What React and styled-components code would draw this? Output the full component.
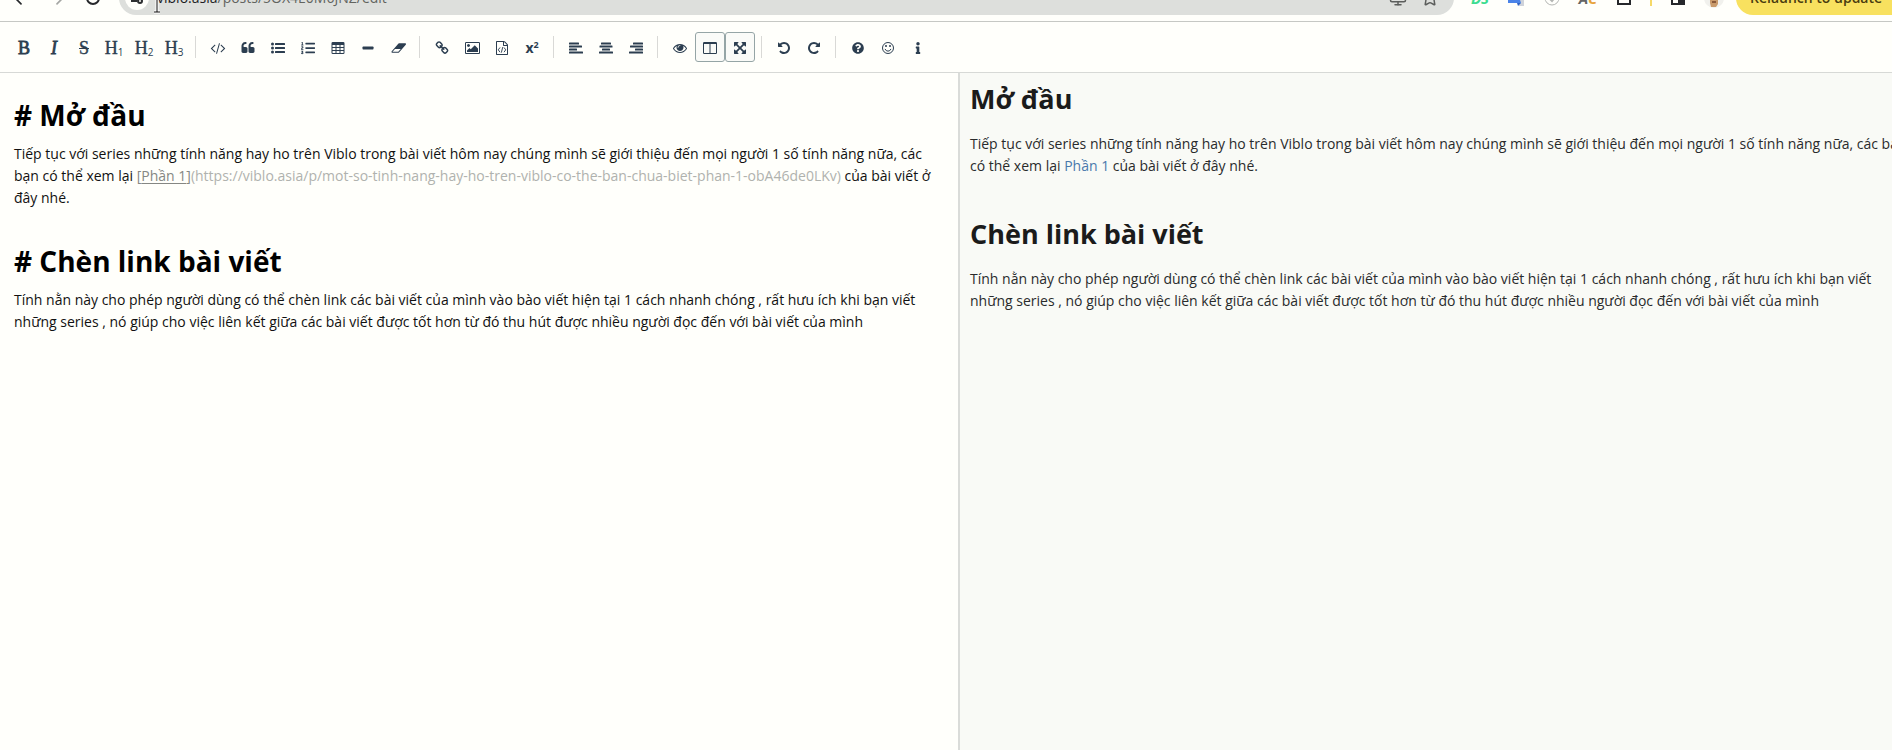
import React from "react";
import styled, { createGlobalStyle } from "styled-components";
import { ArrowLeft, ArrowRight, RotateCw, Monitor, Star } from "lucide-react";
import { FaListOl, FaQuestionCircle, FaInfo } from "react-icons/fa";

const GlobalStyle = createGlobalStyle`
  * {
    box-sizing: border-box;
  }

  body {
    margin: 0;
    overflow: hidden;
    background: #fffffb;
    font-family: "Open Sans", "Noto Sans", sans-serif;
  }
`

// the window is a little wider than what is visible
const Window = styled.div`
  display: flex;
  flex-direction: column;
  width: calc(100% + 28px);
  height: 100vh;
`

// BROWSER BAR
const BrowserBar = styled.header`
  flex: none;
  display: flex;
  align-items: flex-end;
  height: 22px;
  padding: 0 12px 6px 3px;
  border-bottom: 1px solid #c6c8c4;
  overflow: hidden;
  position: relative;
`

const BarButton = styled.button`
  flex: none;
  display: flex;
  align-items: center;
  justify-content: center;
  width: 36px;
  height: 34px;
  padding: 0;
  border: 0;
  background: none;
  color: ${({ $color }) => $color || "#26282b"};
  font: italic 700 15px "Open Sans", sans-serif;
`

const Omnibox = styled.div`
  flex: 1;
  display: flex;
  align-items: center;
  height: 34px;
  margin: 0 8px;
  padding: 0 8px 0 6px;
  border-radius: 17px;
  background: #dddfdc;
`

const SiteInfo = styled.button`
  display: flex;
  align-items: center;
  justify-content: center;
  width: 24px;
  height: 24px;
  margin-right: 8px;
  padding: 0;
  border: 0;
  border-radius: 50%;
  background: #fffffb;
`

const Address = styled.span`
  flex: 1;
  font-size: 14px;
  line-height: 20px;
  color: #62645f;

  b {
    font-weight: 400;
    color: #1c1d1f;
  }
`

const OmniButton = styled(BarButton)`
  width: 32px;
`

const BarDivider = styled.span`
  width: 2px;
  height: 16px;
  margin: 0 8px 9px;
  background: #f6d968;
`

const Relaunch = styled.button`
  flex: none;
  width: 172px;
  height: 34px;
  margin-left: 4px;
  padding: 0 14px;
  border: 0;
  border-radius: 17px;
  background: #f8e15f;
  color: #4a3c10;
  font: 600 14px/20px "Open Sans", sans-serif;
  text-align: left;
  white-space: nowrap;
`

const Cursor = styled.svg`
  position: absolute;
  left: 153px;
  top: 0;
`

// TOOLBAR
const ToolbarStyled = styled.div`
  flex: none;
  display: flex;
  align-items: center;
  padding: 10px 9px;
  border-bottom: 1px solid #d7d9d6;
`

const Tool = styled.button`
  display: flex;
  align-items: center;
  justify-content: center;
  width: 30px;
  height: 30px;
  padding: 2px 0 0;
  border: 1px solid ${({ $active }) => ($active ? "#95a5a6" : "transparent")};
  border-radius: 3px;
  background: ${({ $active }) => ($active ? "#fafbf8" : "none")};
  color: #2c3e50;

  svg {
    flex: none;
    overflow: visible;
  }
`

const Letter = styled.span`
  font-family: "Liberation Serif", serif;
  font-size: 18px;
  line-height: 20px;
  font-style: ${({ $italic }) => ($italic ? "italic" : "normal")};
  text-decoration: ${({ $strike }) => ($strike ? "line-through" : "none")};
  -webkit-text-stroke: ${({ $bold }) => ($bold ? "0.8px" : "0.4px")};

  sub {
    font: 10px/10px "Open Sans", sans-serif;
    vertical-align: -2px;
    -webkit-text-stroke: 0;
  }
`

const Power = styled.span`
  font: 700 14px/20px "Open Sans", sans-serif;

  sup {
    font-size: 9px;
    line-height: 9px;
    vertical-align: 5px;
  }
`

const Separator = styled.i`
  width: 1px;
  height: 22px;
  margin: 0 7px 0 6px;
  background: #d9d9d6;
`

// PANES
const Panes = styled.main`
  flex: 1;
  display: grid;
  grid-template-columns: 1fr 1fr;
  min-height: 0;
`

const Editor = styled.section`
  padding: 21px 14px;
  border-right: 2px solid #dadcd9;
  outline: none;
  color: #111;
  font-size: 14px;
  line-height: 22px;

  h1 {
    margin: 0 0 7px;
    color: #000;
    font-size: 28px;
    line-height: 42px;
  }

  p {
    margin: 0 0 31px;
  }
`

const LinkLabel = styled.span`
  color: #858783;

  u {
    text-underline-offset: 2px;
  }
`

const LinkUrl = styled.span`
  color: #b0b2ae;
`

const Preview = styled.section`
  padding: 6px 10px;
  background: #f9faf6;
  color: #292b2c;
  font-size: 14px;
  line-height: 22px;

  h1 {
    margin: 0 0 14px;
    color: #1b1b1b;
    font-size: 27px;
    line-height: 40px;
  }

  p {
    margin: 0 0 37px;
  }

  a {
    color: #4a78ac;
    text-decoration: none;
  }
`

// ICONS, drawn on a 1792 unit grid
const Glyph = ({ box = "0 0 1792 1792", width = 14, children }) => (
  <svg width={width} height="14" viewBox={box} fill="currentColor" aria-hidden="true">
    {children}
  </svg>
)

const Code = () => (
  <Glyph>
    <path d="M553 1399l-50 50q-10 10-23 10t-23-10l-466-466q-10-10-10-23t10-23l466-466q10-10 23-10t23 10l50 50q10 10 10 23t-10 23l-393 393 393 393q10 10 10 23t-10 23zm591-1067l-373 1291q-4 13-15.5 19.5t-23.5 2.5l-62-17q-13-4-19.5-15.5t-2.5-24.5l373-1291q4-13 15.5-19.5t23.5-2.5l62 17q13 4 19.5 15.5t2.5 24.5zm657 651l-466 466q-10 10-23 10t-23-10l-50-50q-10-10-10-23t10-23l393-393-393-393q-10-10-10-23t10-23l50-50q10-10 23-10t23 10l466 466q10 10 10 23t-10 23z" />
  </Glyph>
)

const quote = "v384q0 80-56 136t-136 56h-384q-80 0-136-56t-56-136v-704q0-104 40.5-198.5t109.5-163.5 163.5-109.5 198.5-40.5h64q26 0 45 19t19 45v128q0 26-19 45t-45 19h-64q-106 0-181 75t-75 181v32q0 40 28 68t68 28h224q80 0 136 56t56 136z"

const Quote = () => (
  <Glyph>
    <path d={`M832 960${quote}M1728 960${quote}`} />
  </Glyph>
)

const ListUl = () => (
  <Glyph>
    {[384, 896, 1408].map(y => (
      <g key={y}>
        <circle cx="192" cy={y} r="192" />
        <rect x="512" y={y - 128} width="1280" height="256" rx="32" />
      </g>
    ))}
  </Glyph>
)

const Table = () => (
  <Glyph box="64 0 1664 1792">
    <path
      fillRule="evenodd"
      d="M224 128h1344q160 0 160 160v1216q0 160-160 160H224q-160 0-160-160V288q0-160 160-160zM192 512v256h384V512zm512 0v256h384V512zm512 0v256h384V512zM192 896v256h384V896zm512 0v256h384V896zm512 0v256h384V896zM192 1280v256h384v-256zm512 0v256h384v-256zm512 0v256h384v-256z"
    />
  </Glyph>
)

const Minus = () => (
  <Glyph>
    <rect x="192" y="704" width="1408" height="384" rx="96" />
  </Glyph>
)

const Eraser = () => (
  <Glyph box="0 0 1984 1792" width={15}>
    <path d="M960 1408l336-384h-768l-336 384h768zm1013-1077q15 34 9.5 71.5t-30.5 65.5l-896 1024q-38 44-96 44h-768q-38 0-69.5-20.5t-47.5-54.5q-15-34-9.5-71.5t30.5-65.5l896-1024q38-44 96-44h768q38 0 69.5 20.5t47.5 54.5z" />
  </Glyph>
)

const Chain = () => (
  <Glyph>
    <path d="M1520 1216q0-40-28-68l-208-208q-28-28-68-28-42 0-72 32 3 3 19 18.5t21.5 21.5 15 19 13 25.5 3.5 27.5q0 40-28 68t-68 28q-15 0-27.5-3.5t-25.5-13-19-15-21.5-21.5-18.5-19q-33 31-33 73 0 40 28 68l206 207q27 27 68 27 40 0 68-26l147-146q28-28 28-67zm-703-705q0-40-28-68l-206-207q-28-28-68-28-39 0-68 27l-147 146q-28 28-28 67 0 40 28 68l208 208q27 27 68 27 42 0 72-31-3-3-19-18.5t-21.5-21.5-15-19-13-25.5-3.5-27.5q0-40 28-68t68-28q15 0 27.5 3.5t25.5 13 19 15 21.5 21.5 18.5 19q33-31 33-73zm895 705q0 120-85 203l-147 146q-83 83-203 83-121 0-204-85l-206-207q-83-83-83-203 0-123 88-209l-88-88q-86 88-208 88-120 0-204-84l-208-208q-84-84-84-204t85-203l147-146q83-83 203-83 121 0 204 85l206 207q83 83 83 203 0 123-88 209l88 88q86-88 208-88 120 0 204 84l208 208q84 84 84 204z" />
  </Glyph>
)

const Picture = () => (
  <Glyph box="-64 0 1920 1792" width={15}>
    <path d="M576 576q0 80-56 136t-136 56-136-56-56-136 56-136 136-56 136 56 56 136zm1024 384v448h-1408v-192l320-320 160 160 512-512zm96-704h-1600q-13 0-22.5 9.5t-9.5 22.5v1216q0 13 9.5 22.5t22.5 9.5h1600q13 0 22.5-9.5t9.5-22.5v-1216q0-13-9.5-22.5t-22.5-9.5zm160 32v1216q0 66-47 113t-113 47h-1600q-66 0-113-47t-47-113v-1216q0-66 47-113t113-47h1600q66 0 113 47t47 113z" />
  </Glyph>
)

const FileCode = () => (
  <Glyph>
    <path d="M1596 380q28 28 48 76t20 88v1152q0 40-28 68t-68 28h-1344q-40 0-68-28t-28-68v-1600q0-40 28-68t68-28h896q40 0 88 20t76 48zm-444-244v376h376q-10-29-22-41l-313-313q-12-12-41-22zm384 1528v-1024h-416q-40 0-68-28t-28-68v-416h-768v1536h1280z" />
    <path d="M640 830L420 1130l220 300M1152 830l220 300-220 300M990 780L810 1490" fill="none" stroke="currentColor" strokeWidth="120" />
  </Glyph>
)

// shift: which side the short lines stick to
const Align = ({ shift }) => (
  <Glyph>
    {[1280, 1664, 1024, 1792].map((width, i) => (
      <rect key={width} x={(1792 - width) * shift} y={192 + i * 384} width={width} height="256" rx="48" />
    ))}
  </Glyph>
)

const Eye = () => (
  <Glyph>
    <path d="M1664 960q-152-236-381-353 61 104 61 225 0 185-131.5 316.5t-316.5 131.5-316.5-131.5-131.5-316.5q0-121 61-225-229 117-381 353 133 205 333.5 326.5t434.5 121.5 434.5-121.5 333.5-326.5zm-720-384q0-20-14-34t-34-14q-125 0-214.5 89.5t-89.5 214.5q0 20 14 34t34 14 34-14 14-34q0-86 61-147t147-61q20 0 34-14t14-34zm848 384q0 34-20 69-140 230-376.5 368.5t-499.5 138.5-499.5-139-376.5-368q-20-35-20-69t20-69q140-229 376.5-368t499.5-139 499.5 139 376.5 368q20 35 20 69z" />
  </Glyph>
)

const Columns = () => (
  <Glyph>
    <path fillRule="evenodd" d="M160 128h1472q160 0 160 160v1216q0 160-160 160H160q-160 0-160-160V288q0-160 160-160zM128 384v1152h704V384zm832 0v1152h704V384z" />
  </Glyph>
)

const Arrows = () => (
  <Glyph box="-128 -128 1792 1792">
    <path d="M1283 413l-355 355 355 355 144-144q29-31 70-14 39 17 39 59v448q0 26-19 45t-45 19h-448q-42 0-59-40-17-39 14-69l144-144-355-355-355 355 144 144q31 30 14 69-17 40-59 40h-448q-26 0-45-19t-19-45v-448q0-42 40-59 39-17 69 14l144 144 355-355-355-355-144 144q-19 19-45 19-12 0-24-5-40-17-40-59v-448q0-26 19-45t45-19h448q42 0 59 40 17 39-14 69l-144 144 355 355 355-355-144-144q-31-30-14-69 17-40 59-40h448q26 0 45 19t19 45v448q0 42-39 59-13 5-25 5-26 0-45-19z" />
  </Glyph>
)

const Undo = ({ flip }) => (
  <Glyph>
    <path
      transform={flip ? "translate(1792 0) scale(-1 1)" : undefined}
      d="M1664 896q0 156-61 298t-164 245-245 164-298 61q-172 0-327-72.5t-264-204.5q-7-10-6.5-22.5t8.5-20.5l137-138q10-9 25-9 16 2 23 12 73 95 179 147t225 52q104 0 198.5-40.5t163.5-109.5 109.5-163.5 40.5-198.5-40.5-198.5-109.5-163.5-163.5-109.5-198.5-40.5q-98 0-188 35.5t-160 101.5l137 138q31 30 14 69-17 40-59 40h-448q-26 0-45-19t-19-45v-448q0-42 40-59 39-17 69 14l130 129q107-101 244.5-156.5t284.5-55.5q156 0 298 61t245 164 164 245 61 298z"
    />
  </Glyph>
)

const Smile = () => (
  <Glyph>
    <circle cx="896" cy="896" r="704" fill="none" stroke="currentColor" strokeWidth="128" />
    <circle cx="640" cy="640" r="128" />
    <circle cx="1152" cy="640" r="128" />
    <path d="M530 1060q110 240 366 240t366-240" fill="none" stroke="currentColor" strokeWidth="128" strokeLinecap="round" />
  </Glyph>
)

const groups = [
  [
    ["Bold", <Letter $bold>B</Letter>],
    ["Italic", <Letter $bold $italic>I</Letter>],
    ["Strikethrough", <Letter $strike>S</Letter>],
    ["Heading 1", <Letter>H<sub>1</sub></Letter>],
    ["Heading 2", <Letter>H<sub>2</sub></Letter>],
    ["Heading 3", <Letter>H<sub>3</sub></Letter>],
  ],
  [
    ["Code", <Code />],
    ["Quote", <Quote />],
    ["Bulleted list", <ListUl />],
    ["Numbered list", <FaListOl size={14} />],
    ["Table", <Table />],
    ["Horizontal line", <Minus />],
    ["Clear", <Eraser />],
  ],
  [
    ["Link", <Chain />],
    ["Image", <Picture />],
    ["Embed", <FileCode />],
    ["Formula", <Power>x<sup>2</sup></Power>],
  ],
  [
    ["Align left", <Align shift={0} />],
    ["Align center", <Align shift={0.5} />],
    ["Align right", <Align shift={1} />],
  ],
  [
    ["Preview", <Eye />],
    ["Side by side", <Columns />, true],
    ["Fullscreen", <Arrows />, true],
  ],
  [
    ["Undo", <Undo />],
    ["Redo", <Undo flip />],
  ],
  [
    ["Help", <FaQuestionCircle size={12} />],
    ["Emoji", <Smile />],
    ["About", <FaInfo size={12} />],
  ],
]

function Toolbar() {
  return (
    <ToolbarStyled role="toolbar">
      {groups.map((tools, i) => (
        <React.Fragment key={i}>
          {i > 0 && <Separator />}
          {tools.map(([name, icon, active]) => (
            <Tool key={name} type="button" aria-label={name} $active={active}>
              {icon}
            </Tool>
          ))}
        </React.Fragment>
      ))}
    </ToolbarStyled>
  )
}

const Orange = styled.span`
  color: #e8a33d;
`

function Browser() {
  return (
    <BrowserBar>
      <BarButton aria-label="Back"><ArrowLeft size={20} /></BarButton>
      <BarButton $color="#a5a7a4" aria-label="Forward"><ArrowRight size={20} /></BarButton>
      <BarButton aria-label="Reload"><RotateCw size={16} strokeWidth={3} /></BarButton>
      <Omnibox>
        <SiteInfo aria-label="Site information">
          <svg width="14" height="14" viewBox="0 0 14 14" fill="none" stroke="#2e3032" strokeWidth="2">
            <path d="M1 10h6M7 4h6" />
            <circle cx="10" cy="10" r="2" />
            <circle cx="3" cy="4" r="2" />
          </svg>
        </SiteInfo>
        <Address><b>viblo.asia</b>/posts/5OX4E0M6JNZ/edit</Address>
        <OmniButton $color="#5c5e5c" aria-label="Install"><Monitor size={18} /></OmniButton>
        <OmniButton $color="#5c5e5c" aria-label="Bookmark"><Star size={18} /></OmniButton>
      </Omnibox>
      <BarButton $color="#3ddc91" aria-label="DS">DS</BarButton>
      <BarButton aria-label="Translate">
        <svg width="16" height="16" viewBox="0 0 16 16">
          <path d="M6 5h10v11h-5z" fill="#cfd3da" />
          <path d="M0 0h9l4 13H0z" fill="#4a83e8" />
          <path d="M9 13h4l-3 3z" fill="#2f62c4" />
        </svg>
      </BarButton>
      <BarButton $color="#b4b6b3" aria-label="Checker">
        <svg width="16" height="16" viewBox="0 0 16 16" fill="none" stroke="currentColor">
          <circle cx="8" cy="8" r="7" />
          <path d="M5 8l3 3 4-5" strokeWidth="2" />
        </svg>
      </BarButton>
      <BarButton $color="#666" aria-label="AC">
        A<Orange>C</Orange>
      </BarButton>
      <BarButton aria-label="Extensions">
        <svg width="16" height="16" viewBox="0 0 16 16" fill="none" stroke="currentColor" strokeWidth="2">
          <path d="M2 2h12v12H2zM3 8h10" />
        </svg>
      </BarButton>
      <BarDivider />
      <BarButton aria-label="Side panel">
        <svg width="16" height="16" viewBox="0 0 16 16">
          <rect x="2" y="3" width="12" height="11" fill="none" stroke="currentColor" strokeWidth="2" />
          <path d="M8 3h6v11H8z" fill="currentColor" />
        </svg>
      </BarButton>
      <BarButton aria-label="Profile">
        <svg width="20" height="20" viewBox="0 0 20 20">
          <circle cx="10" cy="10" r="10" fill="#f1f1ed" />
          <path d="M6 2h8v14l-2 3H7l-1-4z" fill="#c99a6b" />
          <path d="M8 13h4v2H8z" fill="#8a5a3a" />
        </svg>
      </BarButton>
      <Relaunch>Relaunch to update</Relaunch>
      <Cursor width="8" height="14" viewBox="0 0 8 14" fill="none">
        <path d="M4 0v12M1 12h6" stroke="#fff" strokeWidth="3" />
        <path d="M4 0v12M1 12h6" stroke="#111" />
      </Cursor>
    </BrowserBar>
  )
}

function App() {
  return (
    <Window>
      <GlobalStyle />
      <Browser />
      <Toolbar />
      <Panes>
        <Editor contentEditable suppressContentEditableWarning spellCheck={false} role="textbox" aria-label="Markdown">
          <h1># Mở đầu</h1>
          <p>
            Tiếp tục với series những tính năng hay ho trên Viblo trong bài viết hôm nay chúng mình sẽ giới thiệu đến mọi người 1 số tính năng nữa, các bạn có thể xem lại{" "}
            <LinkLabel>[<u>Phần 1</u>]</LinkLabel>
            <LinkUrl>(https://viblo.asia/p/mot-so-tinh-nang-hay-ho-tren-viblo-co-the-ban-chua-biet-phan-1-obA46de0LKv)</LinkUrl>
            {" "}của bài viết ở đây nhé.
          </p>
          <h1># Chèn link bài viết</h1>
          <p>
            Tính nằn này cho phép người dùng có thể chèn link các bài viết của mình vào bào viết hiện tại 1 cách nhanh chóng , rất hưu ích khi bạn viết những series , nó giúp cho việc liên kết giữa các bài viết được tốt hơn từ đó thu hút được nhiều người đọc đến với bài viết của mình
          </p>
        </Editor>
        <Preview>
          <h1>Mở đầu</h1>
          <p>
            Tiếp tục với series những tính năng hay ho trên Viblo trong bài viết hôm nay chúng mình sẽ giới thiệu đến mọi người 1 số tính năng nữa, các bạn có thể xem lại{" "}
            <a href="https://viblo.asia/p/mot-so-tinh-nang-hay-ho-tren-viblo-co-the-ban-chua-biet-phan-1-obA46de0LKv">Phần 1</a>
            {" "}của bài viết ở đây nhé.
          </p>
          <h1>Chèn link bài viết</h1>
          <p>
            Tính nằn này cho phép người dùng có thể chèn link các bài viết của mình vào bào viết hiện tại 1 cách nhanh chóng , rất hưu ích khi bạn viết những series , nó giúp cho việc liên kết giữa các bài viết được tốt hơn từ đó thu hút được nhiều người đọc đến với bài viết của mình
          </p>
        </Preview>
      </Panes>
    </Window>
  )
}

export default App
